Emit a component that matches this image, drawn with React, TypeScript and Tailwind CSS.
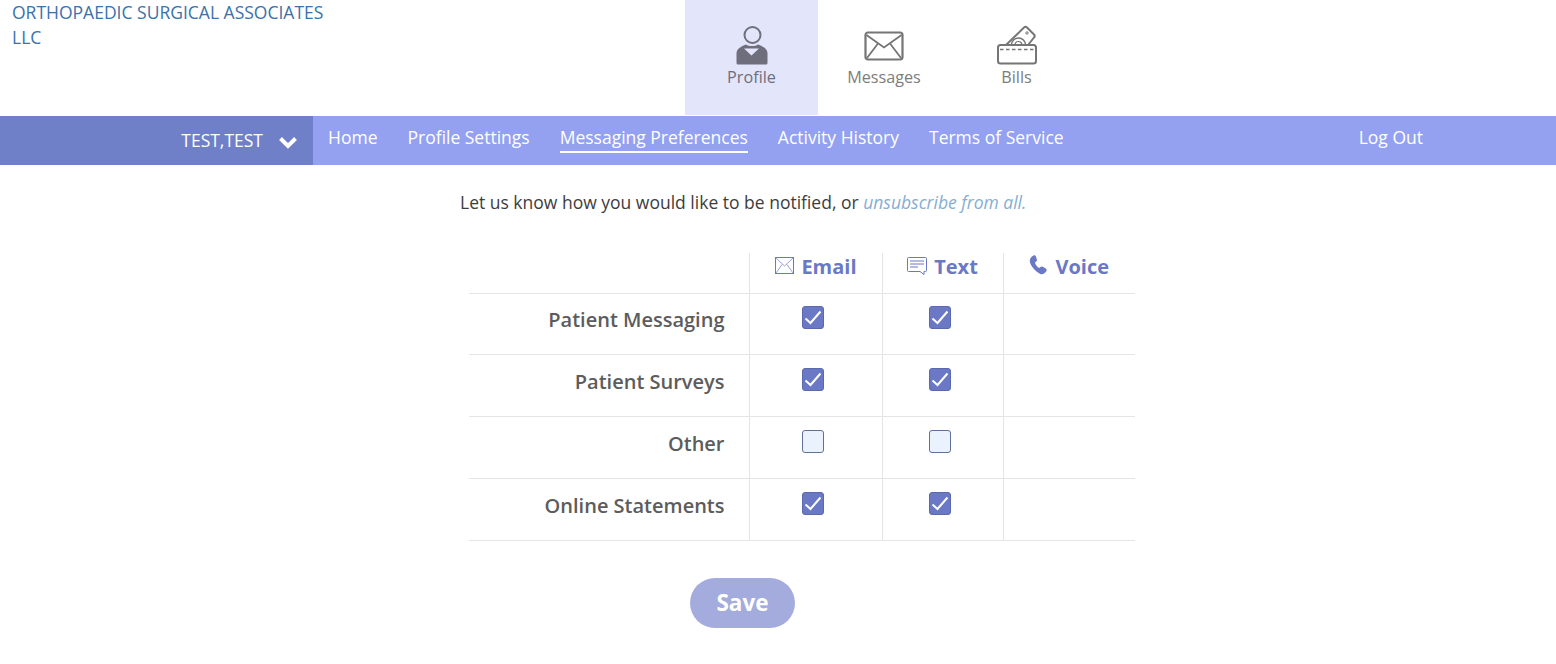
const rows = [
  { label: "Patient Messaging", on: true },
  { label: "Patient Surveys", on: true },
  { label: "Other", on: false },
  { label: "Online Statements", on: true },
];

const links = ["Home", "Profile Settings", "Messaging Preferences", "Activity History", "Terms of Service"];

function ProfileIcon() {
  return (
    <svg width="32" height="39" viewBox="0 0 32 39" fill="none">
      <circle cx="16.500" cy="9" r="8" stroke="#6e6e7c" strokeWidth="2" />
      <path d="M0.500 37V27.500C0.500 22.500 5 20.500 10 18.500C13 20.500 19 20.500 22 18.500C27 20.500 31.500 22.500 31.500 27.500V37a1.500 1.500 0 0 1-1.500 1.500H2A1.500 1.500 0 0 1 .5 37z" fill="#6e6e7c" />
      <path d="M8 22.500h15l-7.500 7z" fill="#e3e5fa" />
    </svg>
  );
}

function MessagesIcon() {
  return (
    <svg width="40" height="30" viewBox="0 0 40 30" fill="none" stroke="#757575" strokeWidth="2.200">
      <rect x="1.500" y="1.500" width="37" height="27" rx="2.500" />
      <path d="M2.500 4L20 16.500 37.500 4M3 27l11-14.500M37 27L26 12.500" strokeWidth="1.800" />
    </svg>
  );
}

function BillsIcon() {
  return (
    <svg width="40" height="40" viewBox="0 0 40 40" fill="none" stroke="#757575" strokeWidth="2">
      <path d="M9 20L27 2.500q1.500-1.500 3 0l7 7q1.500 1.500 0 3L31 20" strokeLinejoin="round" />
      <path d="M14.500 20a7 7 0 0 1 14 0" strokeWidth="1.500" />
      <path d="M18 20a3.500 3.500 0 0 1 7 0" strokeWidth="1.200" />
      <circle cx="30" cy="8" r="1.200" strokeWidth="1" />
      <rect x="1" y="20" width="38" height="18.500" rx="2.500" />
      <path d="M3 24.500h34" strokeDasharray="3.500 2.500" strokeWidth="1.600" />
    </svg>
  );
}

function Tab({ label, active, icon, width }: { label: string; active?: boolean; icon: React.ReactNode; width: string }) {
  return (
    <div className={`${width} h-[115px] flex flex-col items-center ${active ? "bg-[#e3e5fa] text-[#6e6e7c]" : "text-[#7d7d7d]"}`}>
      <div className="h-[65px] flex items-end justify-center">{icon}</div>
      <span className="text-[16.200px] leading-[24px]">{label}</span>
    </div>
  );
}

function Check({ on }: { on: boolean }) {
  return on ? (
    <div className="w-[22px] h-[23px] rounded-[3px] bg-[#6a78c6] border border-[#5b69ad]">
      <svg width="20" height="21" viewBox="0 0 20 21" fill="none">
        <path d="M2.500 11.500L7.500 16 17.500 4.500" stroke="#fff" strokeWidth="2" />
      </svg>
    </div>
  ) : (
    <div className="w-[22px] h-[23px] rounded-[3px] bg-[#eaf2fd] border border-[#5f7196]" />
  );
}

export default function App() {
  return (
    <div className="min-h-screen bg-white font-['Open_Sans',sans-serif]">
      {/* Header */}
      <div className="flex h-[116px]">
        <div className="w-[685px] pl-3 pr-[358px] text-[17.500px] leading-[25px] text-[#3a72aa]">
          ORTHOPAEDIC SURGICAL ASSOCIATES LLC
        </div>
        <Tab width="w-[133px]" label="Profile" active icon={<ProfileIcon />} />
        <Tab width="w-[132px]" label="Messages" icon={<div className="pb-[4px]"><MessagesIcon /></div>} />
        <Tab width="w-[133px]" label="Bills" icon={<BillsIcon />} />
      </div>

      {/* Nav */}
      <div className="flex h-[49px] bg-[#93a1f0] text-white">
        <div className="w-[313px] bg-[#6f7fc8] flex items-center justify-end pr-[15px]">
          <span className="text-[17.500px] mr-[15px]">TEST,TEST</span>
          <svg width="20" height="14" viewBox="0 0 20 14" fill="none" className="mt-[2px]">
            <path d="M2.500 3.500L10 11l7.500-7.500" stroke="#fff" strokeWidth="4" />
          </svg>
        </div>
        <div className="flex-1 flex pl-[15px] gap-[30px] text-[17.500px]">
          {links.map((l) => (
            <div key={l} className="pt-[8px]">
              <span className={`block leading-[27px] ${l === "Messaging Preferences" ? "border-b-2 border-white" : ""}`}>{l}</span>
            </div>
          ))}
        </div>
        <div className="pt-[8px] pr-[133px] text-[17.500px] leading-[27px]">Log Out</div>
      </div>

      {/* Content */}
      <p className="mt-[24px] ml-[460px] text-[17.500px] leading-[27px] text-[#3d3d3d]">
        Let us know how you would like to be notified, or{" "}
        <a className="italic text-[#86aed2]">unsubscribe from all.</a>
      </p>

      <table className="mt-[37px] ml-[469px] w-[666px] table-fixed border-collapse">
        <colgroup>
          <col className="w-[280px]" />
          <col className="w-[133px]" />
          <col className="w-[121px]" />
          <col className="w-[132px]" />
        </colgroup>
        <thead>
          <tr className="h-[40px] border-b border-[#e5e5e5] text-[20px] leading-[28px] font-bold text-[#6a78c6]">
            <th />
            <th className="border-l border-[#e5e5e5] font-bold align-top pl-px">
              <span className="flex justify-center items-center gap-[7px]">
                <svg width="19" height="17" viewBox="0 0 19 17" fill="none" stroke="#6a78c6" className="-mt-[4px]">
                  <rect x="0.500" y="0.500" width="18" height="16" />
                  <path d="M1 1l8.500 8L18 1M1 16l6-8.500M18 16l-6-8.500" strokeWidth="0.700" />
                </svg>
                Email
              </span>
            </th>
            <th className="border-l border-[#e5e5e5] font-bold align-top">
              <span className="flex justify-center items-center gap-[7px]">
                <svg width="20" height="19" viewBox="0 0 20 19" fill="none" stroke="#6a78c6" className="-mt-[2px]">
                  <path d="M1.500 0.500h17a1 1 0 0 1 1 1v12a1 1 0 0 1-1 1H17v3l-4-3H1.500a1 1 0 0 1-1-1v-12a1 1 0 0 1 1-1z" />
                  <path d="M3 4h14M3 7h14M3 10h8" strokeWidth="1" />
                </svg>
                Text
              </span>
            </th>
            <th className="border-l border-[#e5e5e5] font-bold align-top">
              <span className="flex justify-center items-center gap-[7px]">
                <svg width="19" height="20" viewBox="0 0 19 20" className="-mt-[4px]">
                  <path d="M4.500 0.500c1-.5 2 0 2.400 1l1 3c.3 1-.2 1.800-1 2.300l-1 .6c.6 2.400 2.400 4.600 4.500 5.700l1-1c.7-.6 1.500-.8 2.400-.3l3 1.700c1 .6 1.200 1.600.6 2.500-1.300 2.200-3.400 3.800-5.700 3.200C6.500 16.700 1.500 11 .8 6.500.4 4 2.200 1.600 4.500.5z" fill="#6a78c6" />
                </svg>
                Voice
              </span>
            </th>
          </tr>
        </thead>
        <tbody>
          {rows.map((r, i) => (
            <tr key={r.label} className={`${i === 0 ? "h-[61px]" : "h-[62px]"} border-b border-[#e5e5e5]`}>
              <td className={`pr-[24px] ${i === 0 ? "pb-[7px]" : "pb-[6px]"} text-right text-[20px] font-semibold text-[#5c5c5c]`}>{r.label}</td>
              <td className={`border-l border-[#e5e5e5] pl-[52px] ${i === 0 ? "pb-[13px]" : "pb-[12px]"}`}><Check on={r.on} /></td>
              <td className={`border-l border-[#e5e5e5] pl-[46px] ${i === 0 ? "pb-[13px]" : "pb-[12px]"}`}><Check on={r.on} /></td>
              <td className="border-l border-[#e5e5e5]" />
            </tr>
          ))}
        </tbody>
      </table>

      <button className="block mt-[37px] ml-[690px] w-[105px] h-[50px] rounded-[25px] bg-[#a3acdc] text-white text-[22.500px] font-bold">
        Save
      </button>
    </div>
  );
}
